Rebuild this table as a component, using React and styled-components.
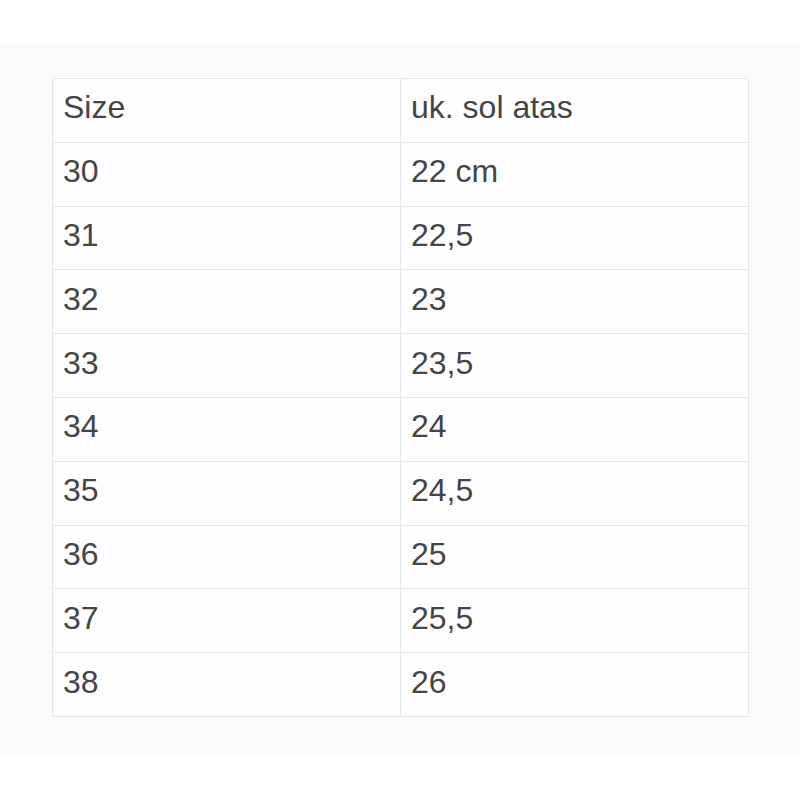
import React from "react";
import styled, { createGlobalStyle } from "styled-components";

const GlobalStyle = createGlobalStyle`
  body {
    margin: 0;
    background: #ffffff;
    font-family: "Liberation Sans", Arial, sans-serif;
  }
`;

const Page = styled.div`
  width: 800px;
  height: 800px;
  background: #ffffff;
  padding-top: 42px;
  box-sizing: border-box;
`;

const Band = styled.div`
  background: #fbfbfb;
  height: 713px;
  padding: 36px 52px 0;
  box-sizing: border-box;
`;

const Table = styled.div`
  display: grid;
  grid-template-columns: 348px 348px;
  background: #fefefe;
  border-top: 1px solid #e6e6e6;
  border-left: 1px solid #e6e6e6;
  width: 696px;
  box-sizing: border-box;
`;

const Cell = styled.div`
  height: 63.8px;
  box-sizing: border-box;
  border-right: 1px solid #e6e6e6;
  border-bottom: 1px solid #e6e6e6;
  display: flex;
  align-items: center;
  padding-left: 10px;
  padding-bottom: 5px;
  font-size: 32px;
  color: #454545;
  font-family: "Liberation Sans", Arial, sans-serif;
`;

const rows = [
  ["Size", "uk. sol atas"],
  ["30", "22 cm"],
  ["31", "22,5"],
  ["32", "23"],
  ["33", "23,5"],
  ["34", "24"],
  ["35", "24,5"],
  ["36", "25"],
  ["37", "25,5"],
  ["38", "26"],
];

export default function App() {
  return (
    <>
      <GlobalStyle />
      <Page>
        <Band>
          <Table>
            {rows.map(([a, b]) => (
              <React.Fragment key={a}>
                <Cell>{a}</Cell>
                <Cell>{b}</Cell>
              </React.Fragment>
            ))}
          </Table>
        </Band>
      </Page>
    </>
  );
}
